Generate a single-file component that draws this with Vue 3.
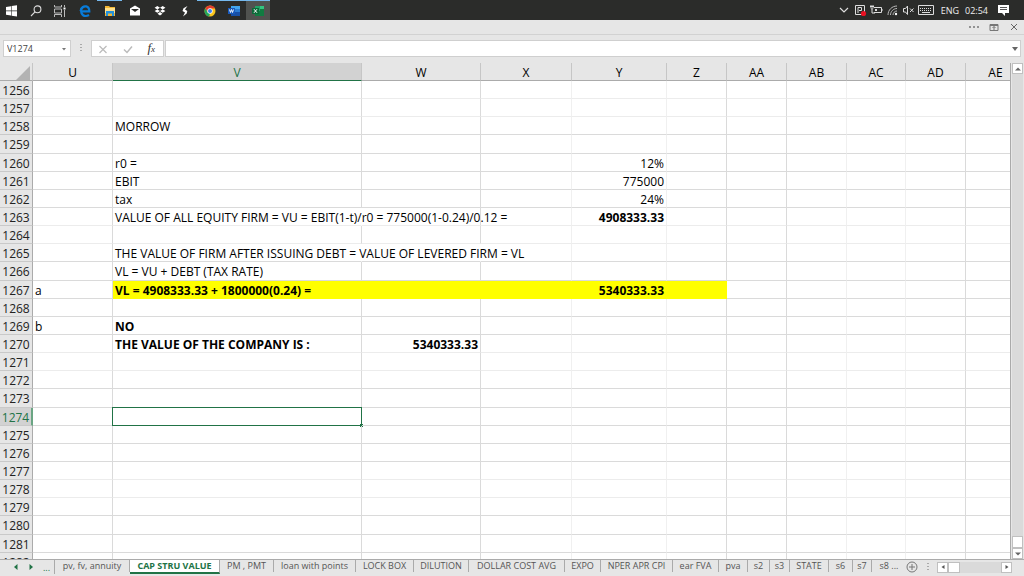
<script setup>
import { ref } from 'vue'

const columns = [
  { name: 'U', width: 80 }, { name: 'V', width: 249 }, { name: 'W', width: 119 },
  { name: 'X', width: 91 }, { name: 'Y', width: 95 }, { name: 'Z', width: 60 },
  { name: 'AA', width: 60 }, { name: 'AB', width: 60 }, { name: 'AC', width: 59 },
  { name: 'AD', width: 60 }, { name: 'AE', width: 60 }
]
const faintColumns = ['X', 'Y', 'AB', 'AC']
const rows = Array.from({ length: 27 }, (_, i) => 1256 + i)

const cells = {
  V1258: { text: 'MORROW' },
  V1260: { text: 'r0 =' },
  Y1260: { text: '12%', num: true },
  V1261: { text: 'EBIT' },
  Y1261: { text: '775000', num: true },
  V1262: { text: 'tax' },
  Y1262: { text: '24%', num: true },
  V1263: { text: 'VALUE OF ALL EQUITY FIRM = VU = EBIT(1-t)/r0 = 775000(1-0.24)/0.12 =', spill: true },
  Y1263: { text: '4908333.33', num: true, bold: true },
  V1265: { text: 'THE VALUE OF FIRM AFTER ISSUING DEBT = VALUE OF LEVERED FIRM = VL', spill: true },
  W1265: { spill: true },
  V1266: { text: 'VL = VU + DEBT (TAX RATE)' },
  U1267: { text: 'a' },
  V1267: { text: 'VL = 4908333.33 + 1800000(0.24) =', bold: true },
  Y1267: { text: '5340333.33', num: true, bold: true },
  U1269: { text: 'b' },
  V1269: { text: 'NO', bold: true },
  V1270: { text: 'THE VALUE OF THE COMPANY IS :', bold: true },
  W1270: { text: '5340333.33', num: true, bold: true }
}
const cell = (c, r) => cells[c + r] || {}
const cellClass = (c, r) => ({
  faint: faintColumns.includes(c),
  num: cell(c, r).num,
  bold: cell(c, r).bold,
  spill: cell(c, r).spill,
  marked: r === 1267 && 'VWXYZ'.includes(c)
})

const sheets = [
  { name: 'pv, fv, annuity', width: 75 }, { name: 'CAP STRU VALUE', width: 90 },
  { name: 'PM , PMT', width: 54 }, { name: 'loan with points', width: 82 },
  { name: 'LOCK BOX', width: 58 }, { name: 'DILUTION', width: 55 },
  { name: 'DOLLAR COST AVG', width: 96 }, { name: 'EXPO', width: 36 },
  { name: 'NPER APR CPI', width: 72 }, { name: 'ear FVA', width: 46 },
  { name: 'pva', width: 29 }, { name: 's2', width: 22 }, { name: 's3', width: 20 },
  { name: 'STATE', width: 39 }, { name: 's6', width: 24 }, { name: 's7', width: 19 },
  { name: 's8 ...', width: 34 }
]
const current = ref('CAP STRU VALUE')
const cellName = ref('V1274')
const formula = ref('')
</script>

<template>
  <div class="screen">
    <header class="taskbar">
      <nav class="apps">
        <button aria-label="Start"><svg viewBox="0 0 14 14"><path fill="#fff" d="M1 3l5-.8v4.4H1zM6.600 2.100L12 1.300v5.300H6.600zM1 7.200h5v4.400l-5-.8zM6.600 7.200H12v5.300l-5.400-.8z" /></svg></button>
        <button aria-label="Search"><svg viewBox="0 0 14 14"><g fill="none" stroke="#ddd" stroke-width="1.100"><circle cx="8.500" cy="5.300" r="3.400" /><path d="M6 7.800L2 12" /></g></svg></button>
        <button aria-label="Task view"><svg viewBox="0 0 14 14"><g fill="none" stroke="#bbb"><path d="M1.500 1v2h7V1M1.500 13v-2.500h7V13M1.500 5h7v4h-7zM11.500 1v2M11.500 6v7" /></g><path fill="#fff" d="M10.500 3.500h2v2h-2z" /></svg></button>
        <button class="wide" aria-label="Edge"><svg viewBox="0 0 14 14"><path fill="none" stroke="#087bd8" stroke-width="2.200" d="M3.700 7.300h7.600C11.300 1.300 5.800 1.300 3.500 4.500 2 6.500 3.500 12 7.500 12c1.500 0 2.500-.4 3.500-1" /><path fill="#087bd8" d="M1.500 7C2 3.500 4 1.500 7 1.500L4 6z" /></svg></button>
        <button class="wide running" aria-label="File Explorer"><svg viewBox="0 0 14 14"><path fill="#f0b634" d="M2 2h4l1 1h5v9H2z" /><path fill="#ffe18b" d="M2 4h10v5H2z" /><path fill="#2391dc" d="M3 7h8v5H9V9.500H5V12H3z" /></svg></button>
        <button class="wide" aria-label="Mail"><svg viewBox="0 0 14 14"><path fill="#fff" d="M2 4.500L7 1.500l5 3v7H2z" /><path fill="#2b2c2a" d="M3 5h8L7 8z" /></svg></button>
        <button class="wide" aria-label="Dropbox"><svg viewBox="0 0 14 14"><path fill="#fff" d="M4.300 2L7 3.700 4.300 5.400 1.600 3.700zM9.700 2l2.700 1.700-2.700 1.700L7 3.700zM4.300 5.400L7 7.100 4.300 8.800 1.600 7.100zM9.700 5.400l2.700 1.700-2.700 1.700L7 7.100zM7 8l2.500 1.700L7 11.500 4.500 9.700z" /></svg></button>
        <button class="wide" aria-label="Shortcuts"><svg viewBox="0 0 14 14"><path fill="#fff" d="M9.500 2L5.500 4.200 4.500 7l2.500 1.500L5 12.500l3.700-3 .6-2.500L7 5.500z" /></svg></button>
        <button class="wide running" aria-label="Chrome"><svg viewBox="0 0 14 14"><circle cx="7" cy="7" r="5.500" fill="#f9c51d" /><path fill="#e33b2e" d="M2.300 4.200A5.500 5.500 0 0 1 12 4.500H7L4.800 8.200z" /><path fill="#25a65b" d="M2.300 4.200L4.700 8.300 7 9.500l-.8 3A5.500 5.500 0 0 1 2.300 4.200z" /><circle cx="7" cy="7" r="2.700" fill="#fff" /><circle cx="7" cy="7" r="2" fill="#3f7ff0" /></svg></button>
        <button class="running" aria-label="Word"><svg viewBox="0 0 14 14"><path fill="#42a5ee" d="M4 2h9v3H4z" /><path fill="#2b7cd3" d="M4 5h9v3H4z" /><path fill="#174fa5" d="M4 8h9v4H4z" /><path fill="#185abd" d="M1 4h7v6H1z" /><path fill="none" stroke="#fff" stroke-width=".9" d="M2.500 5.500l1 3 1-3 1 3 1-3" /></svg></button>
        <button class="running active" aria-label="Excel"><svg viewBox="0 0 14 14"><path fill="#21a366" d="M4 2h5v5H4z" /><path fill="#33c481" d="M9 2h4v3H9z" /><path fill="#107c41" d="M4 7h9v5H4zM9 5h4v3H9z" /><path fill="#0b6a38" d="M1 4h7v6H1z" /><path stroke="#fff" d="M3 5.200l3 3.600M6 5.200L3 8.800" /></svg></button>
      </nav>
      <div class="tray">
        <svg class="t" viewBox="0 0 14 14"><path fill="none" stroke="#ddd" stroke-width="1.200" d="M3 5l4 4 4-4" /></svg>
        <svg class="t" viewBox="0 0 14 14"><path fill="none" stroke="#ddd" d="M2.500 2.500h9v9h-9zM5 10V4.500h3.500v3H6" /><circle cx="10.500" cy="10.500" r="2.600" fill="#e81123" /></svg>
        <svg class="t" viewBox="0 0 14 14"><path fill="none" stroke="#ddd" d="M5 4.500h7.500v5H5M1 3.500h4M2 2v2.500c0 2 2 2 2 0V2M3 6v4h3" /><path fill="#ddd" d="M6 6h2v2H6zM12.500 6h1v2h-1z" /></svg>
        <svg class="t" viewBox="0 0 14 14"><g fill="none" stroke="#bbb"><path d="M3 12C3 7 7 3 12 3M5.500 12c0-3.500 3-6.500 6.500-6.500M8 12c0-2.200 1.800-4 4-4" /></g><circle cx="11" cy="11" r="1.200" fill="#fff" /></svg>
        <svg class="t" viewBox="0 0 14 14"><path fill="none" stroke="#ddd" d="M2.500 5.500h2l2-2.500v8.500l-2-2.500h-2zM9 5.500l3.500 3.500M12.500 5.500L9 9" /></svg>
        <svg class="kb" viewBox="0 0 18 14"><path fill="none" stroke="#ddd" d="M1.500 2.500h15v9h-15z" /><path fill="none" stroke="#ddd" stroke-dasharray="1 1" d="M3 5.500h12M3 7.500h12" /><path stroke="#ddd" d="M5 9.500h8" /></svg>
        <span class="lang">ENG</span>
        <time>02:54</time>
        <svg class="note" viewBox="0 0 14 14"><path fill="#fff" d="M2 2h11v8H9v3l-3-3H2z" /><path stroke="#555" d="M4 4.500h7M4 6.500h7" /></svg>
      </div>
    </header>

    <div class="titlebar">
      <button aria-label="More"><svg viewBox="0 0 12 12"><path stroke="#777" stroke-width="1.500" stroke-dasharray="2 2" d="M1 6h10" /></svg></button>
      <button aria-label="Ribbon options"><svg viewBox="0 0 12 12"><path fill="none" stroke="#777" d="M2 3.500h8v6H2zM2 4.500h8M6 9V5.500M4.500 7L6 5.500 7.500 7" /></svg></button>
      <button aria-label="Close"><svg viewBox="0 0 12 12"><path stroke="#666" d="M3 3l6 6M9 3L3 9" /></svg></button>
    </div>

    <div class="formulabar">
      <div class="namebox">
        <input v-model="cellName" aria-label="Name box">
        <button aria-label="Names"><svg viewBox="0 0 6 6"><path fill="#777" d="M1 2h4L3 4.500z" /></svg></button>
      </div>
      <span class="dots"></span>
      <div class="edit">
        <button aria-label="Cancel"><svg viewBox="0 0 12 12"><path stroke="#bbb" stroke-width="1.200" d="M2.500 3l7 7M9.500 3l-7 7" /></svg></button>
        <button aria-label="Enter"><svg viewBox="0 0 12 12"><path fill="none" stroke="#bbb" stroke-width="1.500" d="M2 6.500l3 3 5-6" /></svg></button>
        <button class="fx" aria-label="Insert function">f<small>x</small></button>
      </div>
      <div class="formula">
        <input v-model="formula" aria-label="Formula">
        <button aria-label="Expand"><svg viewBox="0 0 6 6"><path fill="#666" d="M0 1h6L3 5z" /></svg></button>
      </div>
    </div>

    <main class="sheet">
      <div class="gridwrap">
        <table>
          <colgroup>
            <col class="rowhead">
            <col v-for="c in columns" :key="c.name" :style="{ width: c.width + 'px' }">
          </colgroup>
          <thead>
            <tr>
              <th class="corner"><svg viewBox="0 0 14 14"><path fill="#b3b3b3" d="M14 0v14H0z" /></svg></th>
              <th v-for="c in columns" :key="c.name" :class="{ on: c.name === 'V' }">{{ c.name }}</th>
            </tr>
          </thead>
          <tbody>
            <tr v-for="(r, i) in rows" :key="r" :class="{ tall: i % 7 === 3, light: i % 7 < 2 }">
              <th :class="{ on: r === 1274 }">{{ r }}</th>
              <td v-for="c in columns" :key="c.name" :class="cellClass(c.name, r)">
                {{ cell(c.name, r).text }}
                <span v-if="c.name === 'V' && r === 1274" class="selection"></span>
              </td>
            </tr>
          </tbody>
        </table>
      </div>
      <div class="vscroll">
        <button aria-label="Scroll up"><svg viewBox="0 0 6 6"><path fill="#666" d="M0 4.500h6L3 1.500z" /></svg></button>
        <div class="vtrack"><div class="vthumb"></div></div>
        <button aria-label="Scroll down"><svg viewBox="0 0 6 6"><path fill="#666" d="M0 1.500h6L3 4.500z" /></svg></button>
      </div>
    </main>

    <footer class="tabs">
      <div class="tabnav">
        <button aria-label="Previous sheet"><svg viewBox="0 0 6 6"><path fill="#217346" d="M4.500 0v6L1 3z" /></svg></button>
        <button aria-label="Next sheet"><svg viewBox="0 0 6 6"><path fill="#217346" d="M1.500 0v6L5 3z" /></svg></button>
        <button>...</button>
      </div>
      <button
        v-for="s in sheets" :key="s.name" class="tab" :class="{ current: s.name === current }"
        :style="{ width: s.width + 'px' }" @click="current = s.name"
      >{{ s.name }}</button>
      <button class="add" aria-label="New sheet"><svg viewBox="0 0 12 12"><g fill="none" stroke="#777"><circle cx="6" cy="6" r="5" /><path d="M3 6h6M6 3v6" /></g></svg></button>
      <span class="dots"></span>
      <div class="hscroll">
        <button aria-label="Scroll left"><svg viewBox="0 0 6 6"><path fill="#555" d="M4.500 1v4L1.500 3z" /></svg></button>
        <div class="htrack"><div class="hthumb"></div></div>
        <button aria-label="Scroll right"><svg viewBox="0 0 6 6"><path fill="#555" d="M1.500 1v4L4.500 3z" /></svg></button>
      </div>
    </footer>
  </div>
</template>

<style>
body { margin: 0; background: #e6e6e6; }
</style>

<style scoped>
* { box-sizing: border-box; }
.screen {
  height: 100vh; display: flex; flex-direction: column; overflow: hidden;
  background: #e6e6e6; color: #111; font-family: "Open Sans", "Noto Sans", sans-serif; font-size: 9px;
}
button, input { font: inherit; color: inherit; border: 0; padding: 0; margin: 0; background: none; }
input { outline: 0; min-width: 0; }
svg { display: block; }

.taskbar { height: 20px; flex: none; display: flex; justify-content: space-between; background: #2b2c2a; color: #eee; }
.apps { display: flex; }
.apps button { width: 24px; display: flex; align-items: center; justify-content: center; border-top: 1px solid transparent; }
.apps .wide { width: 25px; }
.apps svg { width: 14px; height: 14px; }
.apps .running { border-top-color: #76b9ed; }
.apps .active { background: #50524f; }
.tray { display: flex; align-items: center; padding-right: 14px; }
.tray .t { width: 14px; height: 14px; margin-right: 2px; }
.tray .kb { width: 18px; height: 14px; margin-right: 6px; }
.tray .lang { margin-right: 6px; }
.tray .note { width: 14px; height: 14px; margin-left: 8px; }

.titlebar { height: 15px; flex: none; display: flex; justify-content: flex-end; align-items: center; gap: 8px; padding-right: 4px; border-bottom: 1px solid #d2d2d2; }
.titlebar svg { width: 12px; height: 12px; }

.formulabar { flex: none; display: flex; align-items: center; height: 28px; padding: 0 3px 1px; }
.namebox, .edit, .formula { display: flex; align-items: center; height: 17px; background: #fff; border: 1px solid #cfcfcf; }
.namebox { width: 68px; color: #444; }
.namebox input { flex: 1; padding-left: 3px; }
.namebox button { margin-right: 3px; }
.namebox svg { width: 6px; height: 6px; }
.dots { width: 2px; height: 9px; margin: 0 9px; background: repeating-linear-gradient(#aaa 0 1px, transparent 1px 3px); }
.edit { width: 73px; justify-content: space-between; padding: 0 8px 0 5px; }
.edit svg { width: 12px; height: 12px; }
.edit .fx { font: italic 13px/13px "Liberation Serif", serif; color: #333; }
.fx small { font-size: 9px; }
.formula { flex: 1; margin-left: 1px; }
.formula input { flex: 1; }
.formula svg { width: 6px; height: 6px; margin-right: 2px; }

.sheet { flex: 1; min-height: 0; display: flex; }
.gridwrap { flex: 1; min-width: 0; overflow: hidden; background: #fff; border-right: 1px solid #aaa; }
table { width: 966px; table-layout: fixed; border-collapse: separate; border-spacing: 0; font-family: "Open Sans", "Noto Sans", sans-serif; font-size: 12px; line-height: 14px; color: #000; }
.rowhead { width: 33px; }
th { font-weight: 400; padding: 2px 0 0; background: #e6e6e6; }
thead th { height: 18px; border-right: 1px solid #c6c6c6; border-bottom: 1px solid #ababab; }
thead th.on { background: #d2d2d2; color: #217346; border-bottom-color: #217346; }
.corner svg { width: 14px; height: 14px; margin: 0 2px 0 auto; }
tbody tr { height: 18px; }
tbody tr.tall { height: 19px; }
tbody th { border-right: 1px solid #ababab; border-bottom: 1px solid #c9c9c9; color: #222; }
tbody th.on { background: #d2d2d2; color: #217346; border-right: 2px solid #6aa583; }
td { position: relative; padding: 2px 2px 0; white-space: nowrap; border-right: 1px solid #dadada; border-bottom: 1px solid #dadada; }
td.faint { border-right-color: #f0f0f0; }
.light td { border-bottom-color: #ececec; }
.num { text-align: right; }
.bold { font-weight: 700; }
td.spill { border-right-color: transparent; }
td.marked { background: #ff0; border-color: #ff0; }
.selection { position: absolute; inset: -1px; border: 1px solid #217346; }
.selection::after { content: ""; position: absolute; right: -2px; bottom: -2px; width: 3px; height: 3px; background: #217346; }

.vscroll { width: 13px; flex: none; display: flex; flex-direction: column; padding-left: 1px; }
.vscroll button, .hscroll button { display: flex; align-items: center; justify-content: center; background: #fff; border: 1px solid #c0c0c0; }
.vscroll button { height: 11px; width: 11px; }
.vscroll svg, .hscroll svg { width: 6px; height: 6px; }
.vtrack { flex: 1; display: flex; flex-direction: column; justify-content: flex-end; width: 11px; background: #dadada; }
.vthumb { height: 12px; background: #fff; border: 1px solid #c0c0c0; }

.tabs { flex: none; display: flex; height: 17px; padding-bottom: 2px; border-top: 1px solid #ababab; color: #555; white-space: nowrap; }
.tabnav { display: flex; width: 55px; align-items: center; gap: 9px; padding-left: 13px; border-right: 1px solid #aaa; color: #217346; }
.tabnav svg { width: 6px; height: 6px; }
.tab { flex: none; height: 12px; line-height: 12px; border-right: 1px solid #aaa; text-align: center; }
.tab.current { height: 14px; background: #fff; color: #217346; font-weight: 700; border-bottom: 2px solid #217346; }
.tab:nth-last-child(4) { border-right: 0; }
.add { width: 12px; }
.add svg { width: 12px; height: 12px; }
.tabs .dots { margin: 3px 8px 0 9px; }
.hscroll { display: flex; align-items: center; flex: 1; margin-right: 12px; }
.hscroll button { width: 11px; height: 11px; }
.htrack { flex: 1; height: 11px; background: #dadada; }
.hthumb { width: 12px; height: 11px; background: #fff; border: 1px solid #c0c0c0; }
</style>
